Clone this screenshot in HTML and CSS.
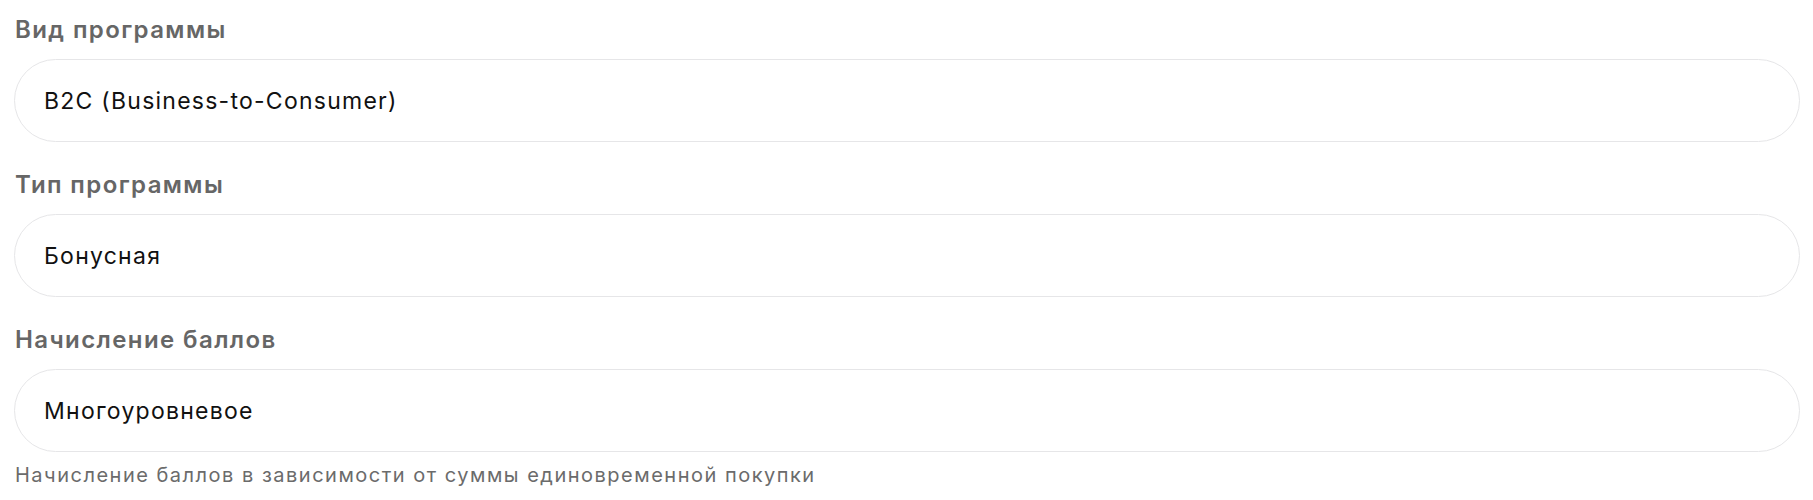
FILE: index.html
```html
<!DOCTYPE html>
<html lang="ru">
<head>
<meta charset="utf-8">
<title>Программа лояльности</title>
<link rel="stylesheet" href="styles.css">
</head>
<body>
<form class="form">
  <div class="field">
    <label class="label">Вид программы</label>
    <div class="input">B2C (Business-to-Consumer)</div>
  </div>
  <div class="field">
    <label class="label">Тип программы</label>
    <div class="input">Бонусная</div>
  </div>
  <div class="field">
    <label class="label">Начисление баллов</label>
    <div class="input">Многоуровневое</div>
    <p class="hint">Начисление баллов в зависимости от суммы единовременной покупки</p>
  </div>
</form>
</body>
</html>
```
FILE: styles.css
```css
* { box-sizing: border-box; }
html, body { margin: 0; padding: 0; background: #ffffff; }
body { font-family: Inter, "Noto Sans", sans-serif; }
.form {
  display: flex;
  flex-direction: column;
  gap: 28px;
  padding: 15px 13px 0 14px;
}
.field { display: flex; flex-direction: column; }
.label {
  display: block;
  font-size: 24px;
  font-weight: 600;
  line-height: 30px;
  letter-spacing: 1.4px;
  color: #666666;
  padding-left: 1px;
  margin-bottom: 14px;
}
.input {
  height: 83px;
  border: 1px solid #e6e6e8;
  border-radius: 42px;
  padding: 0 29px;
  display: flex;
  align-items: center;
  font-size: 23px;
  letter-spacing: 1.25px;
  color: #111111;
}
.hint {
  margin: 10px 0 0;
  font-size: 20px;
  line-height: 26px;
  letter-spacing: 1.5px;
  color: #6b6b6b;
  padding-left: 1px;
}
```
